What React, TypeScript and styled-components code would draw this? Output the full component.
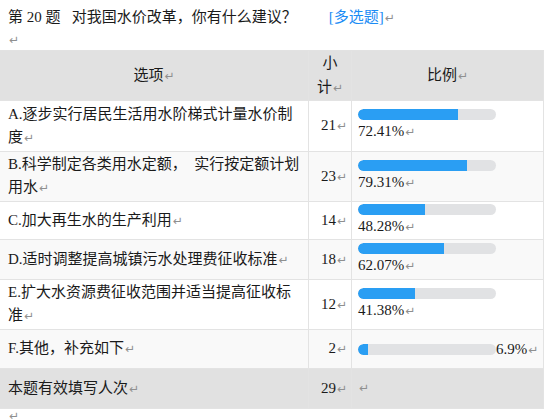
import React from "react";
import styled, { createGlobalStyle } from "styled-components";

const GlobalStyle = createGlobalStyle`
  html, body {
    margin: 0;
    padding: 0;
    background: #ffffff;
  }
  body {
    font-family: "Liberation Serif", "Noto Sans CJK SC", serif;
    font-size: 15px;
    color: #1a1a1a;
  }
`;

const rows = [
  { label: ["A.逐步实行居民生活用水阶梯式计量水价制", "度"], count: 21, pct: 72.41, h: 51 },
  { label: ["B.科学制定各类用水定额，  实行按定额计划", "用水"], count: 23, pct: 79.31, h: 50 },
  { label: ["C.加大再生水的生产利用"], count: 14, pct: 48.28, h: 38 },
  { label: ["D.适时调整提高城镇污水处理费征收标准"], count: 18, pct: 62.07, h: 40 },
  { label: ["E.扩大水资源费征收范围并适当提高征收标", "准"], count: 12, pct: 41.38, h: 50 },
  { label: ["F.其他，补充如下"], count: 2, pct: 6.9, h: 39 },
];

const Page = styled.div`
  width: 560px;
  height: 420px;
  overflow: hidden;
`;

const Title = styled.div`
  padding: 6px 0 0 8px;
  line-height: 22px;
  white-space: pre;
`;

const Tag = styled.span`
  color: #1b8cf5;
  margin-left: 32px;
`;

const Mark = styled.span`
  font-family: "DejaVu Sans", sans-serif;
  font-size: 12px;
  color: #8f8f8f;
  margin-left: 1px;
`;

const EmptyLine = styled.div<{ $h: number }>`
  padding-left: 8px;
  height: ${(p) => p.$h}px;
  line-height: ${(p) => p.$h}px;
`;

const Table = styled.div<{ $rows: string }>`
  display: grid;
  grid-template-columns: 309px 43px 192px;
  grid-template-rows: ${(p) => p.$rows};
  width: 544px;
  border-top: 1px solid #e2e2e2;
`;

const Cell = styled.div<{ $bg: string; $align?: "left" | "center" | "right" }>`
  background: ${(p) => p.$bg};
  border-right: 1px solid #e3e3e3;
  border-bottom: 1px solid #e3e3e3;
  display: flex;
  flex-direction: column;
  justify-content: center;
  align-items: ${(p) =>
    p.$align === "center" ? "center" : p.$align === "right" ? "flex-end" : "flex-start"};
  text-align: ${(p) => p.$align || "left"};
  line-height: 23px;
  padding: 0 5px 0 8px;
  box-sizing: border-box;
  overflow: hidden;
`;

const HeadCell = styled(Cell)`
  padding: 0;
`;

const NumCell = styled(Cell)`
  padding: 0 4px 0 0;
`;

const BarCell = styled(Cell)`
  padding: 0 0 0 6px;
`;

const BarWrap = styled.div`
  display: flex;
  flex-wrap: wrap;
  align-items: center;
  line-height: 22px;
`;

const Track = styled.div`
  width: 138px;
  height: 11px;
  border-radius: 6px;
  background: #e1e2e4;
  overflow: hidden;
`;

const Fill = styled.div`
  height: 100%;
  background: #2a9ef3;
  border-radius: 6px 0 0 6px;
`;

const Pct = styled.span`
  white-space: nowrap;
`;

const Line = styled.div`
  white-space: pre;
`;

const HeadStack = styled.div`
  line-height: 24px;
  text-align: center;
`;

export default function App() {
  const heights = ["50px", ...rows.map((r) => `${r.h}px`), "40px"].join(" ");
  return (
    <Page>
      <GlobalStyle />
      <Title>
        第 20 题   对我国水价改革，你有什么建议？
        <Tag>[多选题]</Tag>
        <Mark>↵</Mark>
      </Title>
      <EmptyLine $h={21}>
        <Mark>↵</Mark>
      </EmptyLine>
      <Table $rows={heights}>
        <HeadCell $bg="#e1e1e1" $align="center">
          <span>
            选项<Mark>↵</Mark>
          </span>
        </HeadCell>
        <HeadCell $bg="#e1e1e1" $align="center">
          <HeadStack>
            小<br />计<Mark>↵</Mark>
          </HeadStack>
        </HeadCell>
        <HeadCell $bg="#e1e1e1" $align="center">
          <span>
            比例<Mark>↵</Mark>
          </span>
        </HeadCell>

        {rows.map((r, i) => {
          const bg = i % 2 === 1 ? "#f9f9f9" : "#ffffff";
          return (
            <React.Fragment key={r.count + "-" + i}>
              <Cell $bg={bg}>
                <div>
                  {r.label.map((line, j) => (
                    <Line key={j}>
                      {line}
                      {j === r.label.length - 1 && <Mark>↵</Mark>}
                    </Line>
                  ))}
                </div>
              </Cell>
              <NumCell $bg={bg} $align="right">
                <span>
                  {r.count}
                  <Mark>↵</Mark>
                </span>
              </NumCell>
              <BarCell $bg={bg}>
                <BarWrap>
                  <Track>
                    <Fill style={{ width: `${r.pct}%` }} />
                  </Track>
                  <Pct>
                    {r.pct}%<Mark>↵</Mark>
                  </Pct>
                </BarWrap>
              </BarCell>
            </React.Fragment>
          );
        })}

        <Cell $bg="#e1e1e1">
          <span>
            本题有效填写人次<Mark>↵</Mark>
          </span>
        </Cell>
        <NumCell $bg="#e1e1e1" $align="right">
          <span>
            29<Mark>↵</Mark>
          </span>
        </NumCell>
        <BarCell $bg="#e1e1e1">
          <Mark>↵</Mark>
        </BarCell>
      </Table>
      <EmptyLine $h={12}>
        <Mark>↵</Mark>
      </EmptyLine>
    </Page>
  );
}
